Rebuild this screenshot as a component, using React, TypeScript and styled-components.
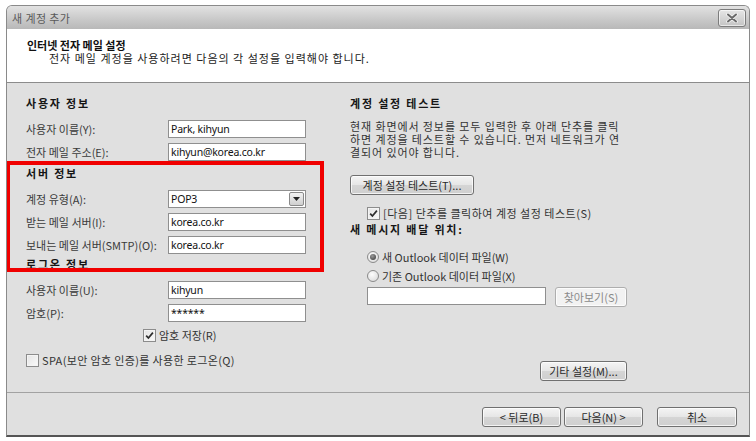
import React from "react";
import styled, { createGlobalStyle } from "styled-components";

const Global = createGlobalStyle`
  html, body { margin: 0; padding: 0; background: #ffffff; }
  body { font-family: "Noto Sans CJK KR", "Liberation Sans", sans-serif; font-size: 11px; color: #333; }
  * { box-sizing: border-box; }
`;

const Window = styled.div`
  position: relative;
  margin: 5px 0 0 6px;
  width: 744px;
  height: 432px;
  border: 1px solid #8a8a8a;
  border-bottom: 2px solid #555;
  border-radius: 6px 6px 0 0;
  background: #e0e0e0;
  display: flex;
  flex-direction: column;
  overflow: hidden;
`;

const TitleBar = styled.div`
  height: 23px;
  flex: none;
  display: flex;
  align-items: center;
  justify-content: space-between;
  padding: 0 3px 0 5px;
  background: linear-gradient(#e2e2e2, #c8c8c8 60%, #b8b8b8);
`;

const TitleText = styled.span`
  color: #5a5a5a;
  font-size: 11px;
  line-height: 14px;
  letter-spacing: 0.4px;
`;

const CloseBtn = styled.div`
  width: 28px;
  height: 18px;
  border: 1px solid #7c7c7c;
  border-radius: 3px;
  background: linear-gradient(#e6e6e6, #c4c4c4);
  box-shadow: inset 0 0 0 1px rgba(255, 255, 255, 0.6);
  display: flex;
  align-items: center;
  justify-content: center;
`;

const Header = styled.div`
  height: 54px;
  flex: none;
  background: #ffffff;
  border-bottom: 1px solid #8c8c8c;
  padding: 9px 0 0 20px;
`;

const HeaderTitle = styled.div`
  font-weight: 700;
  color: #111;
  font-size: 11px;
  line-height: 14px;
  letter-spacing: 0px;
`;

const HeaderSub = styled.div`
  padding-left: 22px;
  color: #222;
  font-size: 11px;
  line-height: 13px;
  letter-spacing: 1px;
`;

const Body = styled.div`
  height: 309px;
  flex: none;
  display: grid;
  grid-template-columns: 324px 277px;
  padding: 13px 0 0 19px;
`;

const Column = styled.div`
  display: flex;
  flex-direction: column;
`;

const SectionTitle = styled.div<{ $top?: number; $bottom?: number }>`
  font-weight: 700;
  color: #151515;
  font-size: 11px;
  line-height: 14px;
  height: 14px;
  letter-spacing: 1.8px;
  white-space: nowrap;
  margin-top: ${(p) => p.$top ?? 0}px;
  margin-bottom: ${(p) => p.$bottom ?? 9}px;
`;

const FieldRow = styled.div<{ $gap?: number }>`
  display: flex;
  align-items: center;
  height: 20px;
  margin-bottom: ${(p) => p.$gap ?? 3}px;
`;

const Label = styled.span`
  width: 142px;
  flex: none;
  color: #3a3a3a;
  line-height: 14px;
  white-space: nowrap;
`;

const TextBox = styled.div<{ $w?: number }>`
  width: ${(p) => p.$w ?? 138}px;
  height: 18px;
  border: 1px solid #8f8f8f;
  background: #fff;
  display: flex;
  align-items: center;
  padding-left: 2px;
  font-family: "Noto Sans", "Liberation Sans", sans-serif;
  font-size: 10.5px;
  color: #111;
  letter-spacing: -0.2px;
  position: relative;
`;

const DropArrow = styled.div`
  position: absolute;
  right: 1px;
  top: 1px;
  width: 15px;
  height: 14px;
  border: 1px solid #8a8a8a;
  border-radius: 2px;
  background: linear-gradient(#f2f2f2, #cfcfcf);
  display: flex;
  align-items: center;
  justify-content: center;
`;

const CheckRow = styled.div<{ $indent?: number; $top?: number; $ls?: number }>`
  display: flex;
  align-items: center;
  gap: 3px;
  height: 18px;
  padding-left: ${(p) => p.$indent ?? 0}px;
  margin-top: ${(p) => p.$top ?? 0}px;
  color: #333;
  line-height: 14px;
  letter-spacing: ${(p) => p.$ls ?? 0}px;
  white-space: nowrap;
`;

const Box = styled.span`
  width: 13px;
  height: 13px;
  flex: none;
  border: 1px solid #8c8c8c;
  background: linear-gradient(135deg, #e4e4e4, #fafafa);
  box-shadow: inset 0 0 0 1px #f4f4f4;
  display: flex;
  align-items: center;
  justify-content: center;
`;

const Radio = styled.span<{ $on?: boolean }>`
  width: 12px;
  height: 12px;
  flex: none;
  border-radius: 50%;
  border: 1px solid #8a8a8a;
  background: radial-gradient(circle at 40% 35%, #fdfdfd, #d6d6d6);
  display: flex;
  align-items: center;
  justify-content: center;
  &::after {
    content: "";
    width: 6px;
    height: 6px;
    border-radius: 50%;
    background: ${(p) => (p.$on ? "radial-gradient(circle at 40% 35%, #9a9a9a, #333)" : "transparent")};
  }
`;

const Paragraph = styled.div`
  margin-top: 10px;
  color: #333;
  line-height: 13px;
  letter-spacing: 0.9px;
  white-space: nowrap;
`;

const Button = styled.button<{ $w: number; $disabled?: boolean }>`
  width: ${(p) => p.$w}px;
  height: 20px;
  flex: none;
  padding: 0;
  font-family: inherit;
  font-size: 11px;
  line-height: 14px;
  color: ${(p) => (p.$disabled ? "#8a8a8a" : "#2a2a2a")};
  border: 1px solid ${(p) => (p.$disabled ? "#aeaeae" : "#707070")};
  border-radius: 3px;
  background: ${(p) =>
    p.$disabled ? "#f2f2f2" : "linear-gradient(#f4f4f4, #e6e6e6 50%, #d5d5d5 51%, #cfcfcf)"};
  box-shadow: inset 0 0 0 1px rgba(255, 255, 255, 0.75);
`;

const TestButtonRow = styled.div`
  display: flex;
  margin-top: 16px;
`;

const BrowseRow = styled.div`
  display: flex;
  align-items: flex-start;
  gap: 9px;
  padding-left: 17px;
  margin-top: 2px;
`;

const RightTools = styled.div`
  display: flex;
  justify-content: flex-end;
  margin-top: 54px;
`;

const Footer = styled.div`
  flex: 1;
  border-top: 1px solid #a2a2a2;
  display: flex;
  justify-content: flex-end;
  align-items: flex-start;
  padding: 14px 12px 0 0;
`;

const NavGroup = styled.div`
  display: flex;
  gap: 3px;
  margin-right: 14px;
`;

const Highlight = styled.div`
  position: absolute;
  left: -1px;
  top: 155px;
  width: 318px;
  height: 111px;
  border: 4px solid #f00000;
  pointer-events: none;
`;

const Check = () => (
  <svg width="11" height="11" viewBox="0 0 11 11">
    <path d="M2.2 5.6 L4.4 8 L8.9 2.6" fill="none" stroke="#2e2e2e" strokeWidth="1.7" />
  </svg>
);

export default function App() {
  return (
    <>
      <Global />
      <Window>
        <TitleBar>
          <TitleText>새 계정 추가</TitleText>
          <CloseBtn>
            <svg width="14" height="10" viewBox="0 0 14 10">
              <path d="M3 1.5 L11 8.5 M11 1.5 L3 8.5" stroke="#f4f4f4" strokeWidth="3.6" strokeLinecap="round" />
              <path d="M3 1.5 L11 8.5 M11 1.5 L3 8.5" stroke="#6a6a6a" strokeWidth="2" strokeLinecap="round" />
            </svg>
          </CloseBtn>
        </TitleBar>
        <Header>
          <HeaderTitle>인터넷 전자 메일 설정</HeaderTitle>
          <HeaderSub>전자 메일 계정을 사용하려면 다음의 각 설정을 입력해야 합니다.</HeaderSub>
        </Header>
        <Body>
          <Column>
            <SectionTitle $bottom={9}>사용자 정보</SectionTitle>
            <FieldRow>
              <Label>사용자 이름(Y):</Label>
              <TextBox>Park, kihyun</TextBox>
            </FieldRow>
            <FieldRow $gap={0}>
              <Label>전자 메일 주소(E):</Label>
              <TextBox>kihyun@korea.co.kr</TextBox>
            </FieldRow>
            <SectionTitle $top={4}>서버 정보</SectionTitle>
            <FieldRow>
              <Label>계정 유형(A):</Label>
              <TextBox>
                POP3
                <DropArrow>
                  <svg width="7" height="4" viewBox="0 0 7 4">
                    <path d="M0 0 L7 0 L3.5 4 Z" fill="#222" />
                  </svg>
                </DropArrow>
              </TextBox>
            </FieldRow>
            <FieldRow>
              <Label>받는 메일 서버(I):</Label>
              <TextBox>korea.co.kr</TextBox>
            </FieldRow>
            <FieldRow $gap={0}>
              <Label>보내는 메일 서버(SMTP)(O):</Label>
              <TextBox>korea.co.kr</TextBox>
            </FieldRow>
            <SectionTitle $top={2}>로그온 정보</SectionTitle>
            <FieldRow>
              <Label>사용자 이름(U):</Label>
              <TextBox>kihyun</TextBox>
            </FieldRow>
            <FieldRow $gap={0}>
              <Label>암호(P):</Label>
              <TextBox>******</TextBox>
            </FieldRow>
            <CheckRow $indent={117} $top={3}>
              <Box>
                <Check />
              </Box>
              암호 저장(R)
            </CheckRow>
            <CheckRow $top={7} $ls={0.35}>
              <Box />
              SPA(보안 암호 인증)를 사용한 로그온(Q)
            </CheckRow>
          </Column>
          <Column>
            <SectionTitle $bottom={0}>계정 설정 테스트</SectionTitle>
            <Paragraph>
              현재 화면에서 정보를 모두 입력한 후 아래 단추를 클릭
              <br />
              하면 계정을 테스트할 수 있습니다. 먼저 네트워크가 연
              <br />
              결되어 있어야 합니다.
            </Paragraph>
            <TestButtonRow>
              <Button $w={124}>계정 설정 테스트(T)...</Button>
            </TestButtonRow>
            <CheckRow $indent={17} $top={9} $ls={0.5}>
              <Box>
                <Check />
              </Box>
              [다음] 단추를 클릭하여 계정 설정 테스트(S)
            </CheckRow>
            <SectionTitle $bottom={0}>새 메시지 배달 위치:</SectionTitle>
            <CheckRow $indent={17} $top={12}>
              <Radio $on />새 Outlook 데이터 파일(W)
            </CheckRow>
            <CheckRow $indent={17} $top={1}>
              <Radio />
              기존 Outlook 데이터 파일(X)
            </CheckRow>
            <BrowseRow>
              <TextBox $w={179} />
              <Button $w={72} $disabled>
                찾아보기(S)
              </Button>
            </BrowseRow>
            <RightTools>
              <Button $w={87}>기타 설정(M)...</Button>
            </RightTools>
          </Column>
        </Body>
        <Footer>
          <NavGroup>
            <Button $w={79}>&lt; 뒤로(B)</Button>
            <Button $w={79}>다음(N) &gt;</Button>
          </NavGroup>
          <Button $w={80}>취소</Button>
        </Footer>
        <Highlight />
      </Window>
    </>
  );
}
